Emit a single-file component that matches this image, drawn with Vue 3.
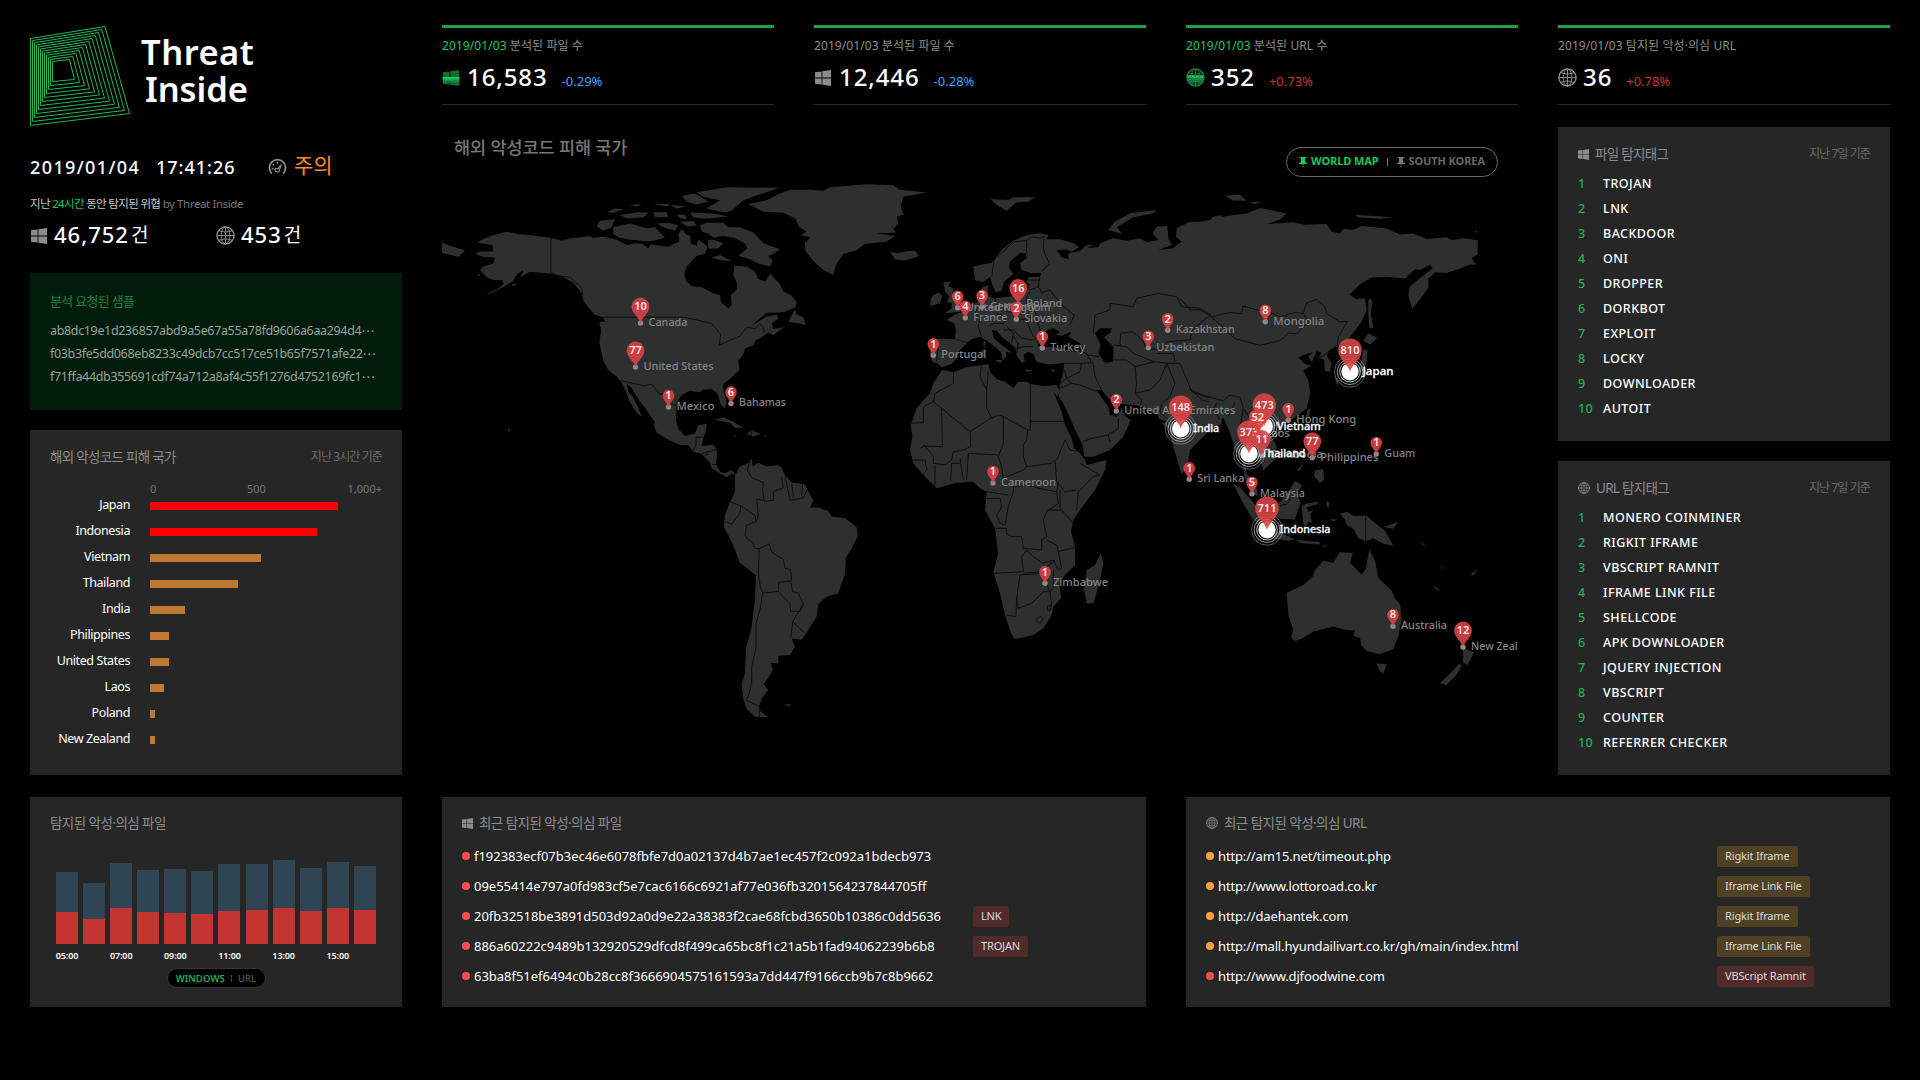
<script setup>
import { h } from 'vue'

const WinIcon = (props) =>
  h('svg', { viewBox: '0 0 16 16', fill: props.fill || '#8c8c8c' }, [
    h('path', { d: 'M0 2.3 6.6 1.4V7.6H0ZM7.4 1.3 16 0V7.6H7.4ZM0 8.4H6.6V14.6L0 13.7ZM7.4 8.4H16V16L7.4 14.7Z' })
  ])
WinIcon.props = ['fill']

const GlobeIcon = (props) =>
  h('svg', { viewBox: '0 0 20 20', fill: 'none', stroke: props.stroke || '#8c8c8c', 'stroke-width': 1 }, [
    h('circle', { cx: 10, cy: 10, r: 9, 'stroke-width': 1.5 }),
    h('ellipse', { cx: 10, cy: 10, rx: 4.6, ry: 9 }),
    h('path', { d: 'M10 1V19M1 10H19M3 5Q10 8 17 5M3 15Q10 12 17 15' })
  ])
GlobeIcon.props = ['stroke']

const rings = Array.from({ length: 12 }, (_, i) => {
  const t = i / 11
  const m = (a, b) => (a + (b - a) * t).toFixed(2)
  return `${m(0.5, 22.5)},${m(12.5, 35.5)} ${m(75, 39.5)},${m(0.5, 33.5)} ${m(99.5, 44.5)},${m(87.5, 53.5)} ${m(0.5, 22.5)},${m(99.5, 55.5)}`
})

const samples = [
  'ab8dc19e1d236857abd9a5e67a55a78fd9606a6aa294d4',
  'f03b3fe5dd068eb8233c49dcb7cc517ce51b65f7571afe22',
  'f71ffa44db355691cdf74a712a8af4c55f1276d4752169fc1'
]

const stats = [
  { label: '분석된 파일 수', value: '16,583', diff: '-0.29%', icon: 'win', on: true },
  { label: '분석된 파일 수', value: '12,446', diff: '-0.28%', icon: 'win' },
  { label: '분석된 URL 수', value: '352', diff: '+0.73%', icon: 'globe', on: true, up: true },
  { label: '탐지된 악성·의심 URL', value: '36', diff: '+0.78%', icon: 'globe', up: true }
]

const countries = [
  ['Japan', 188, true], ['Indonesia', 167, true], ['Vietnam', 111], ['Thailand', 88], ['India', 35],
  ['Philippines', 19], ['United States', 19], ['Laos', 14], ['Poland', 5], ['New Zealand', 5]
]

const hours = [
  [72, 32, '05:00'], [61, 25], [81, 36, '07:00'], [74, 32], [75, 31, '09:00'], [73, 30],
  [80, 33, '11:00'], [80, 34], [84, 36, '13:00'], [76, 33], [82, 36, '15:00'], [78, 34]
]

const fileTags = ['TROJAN', 'LNK', 'BACKDOOR', 'ONI', 'DROPPER', 'DORKBOT', 'EXPLOIT', 'LOCKY', 'DOWNLOADER', 'AUTOIT']
const urlTags = ['MONERO COINMINER', 'RIGKIT IFRAME', 'VBSCRIPT RAMNIT', 'IFRAME LINK FILE', 'SHELLCODE', 'APK DOWNLOADER', 'JQUERY INJECTION', 'VBSCRIPT', 'COUNTER', 'REFERRER CHECKER']

const files = [
  ['f192383ecf07b3ec46e6078fbfe7d0a02137d4b7ae1ec457f2c092a1bdecb973'],
  ['09e55414e797a0fd983cf5e7cac6166c6921af77e036fb3201564237844705ff'],
  ['20fb32518be3891d503d92a0d9e22a38383f2cae68fcbd3650b10386c0dd5636', 'LNK'],
  ['886a60222c9489b132920529dfcd8f499ca65bc8f1c21a5b1fad94062239b6b8', 'TROJAN'],
  ['63ba8f51ef6494c0b28cc8f3666904575161593a7dd447f9166ccb9b7c8b9662']
]
const urls = [
  ['http://am15.net/timeout.php', 'Rigkit Iframe', 'warn'],
  ['http://www.lottoroad.co.kr', 'Iframe Link File', 'warn'],
  ['http://daehantek.com', 'Rigkit Iframe', 'warn'],
  ['http://mall.hyundailivart.co.kr/gh/main/index.html', 'Iframe Link File', 'warn'],
  ['http://www.djfoodwine.com', 'VBScript Ramnit', 'bad']
]

// x, y, count, name, label width
const pins = [
  [640.5, 323, 10, 'Canada', 39], [635.5, 367, 77, 'United States', 70], [668.5, 407, 1, 'Mexico', 38],
  [731, 403.5, 6, 'Bahamas', 47], [957.7, 307.7, 6, 'United Kingdom', 85], [982, 307, 3, 'Germany', 46],
  [965.3, 317.7, 4, 'France', 34], [1018.3, 304.5, 16, 'Poland', 36], [1016.3, 319.3, 2, 'Slovakia', 43],
  [1042.3, 348, 1, 'Turkey', 35], [933.3, 355.3, 1, 'Portugal', 45], [1167.7, 330.3, 2, 'Kazakhstan', 59],
  [1148.3, 347.7, 3, 'Uzbekistan', 58], [1116.3, 411, 2, 'United Arab Emirates', 111],
  [1189.3, 479.3, 1, 'Sri Lanka', 47], [993, 483, 1, 'Cameroon', 55], [1045, 583.3, 1, 'Zimbabwe', 55],
  [1265.3, 321.7, 8, 'Mongolia', 51], [1288.3, 420.3, 1, 'Hong Kong', 60], [1312.3, 457.7, 77, 'Philippines', 58],
  [1376.3, 454, 1, 'Guam', 31], [1252, 493.7, 5, 'Malaysia', 45], [1393, 626.2, 8, 'Australia', 46],
  [1463, 647, 12, 'New Zealand', 66], [1257.7, 434, 52, 'Laos', 24], [1261.7, 455.5, 11, 'Cambodia', 53]
]
const hot = [
  [1350, 371.7, 810, 'Japan', 31], [1180.7, 428.7, 148, 'India', 26], [1264.3, 426.5, 473, 'Vietnam', 44],
  [1249, 453.7, 373, 'Thailand', 44], [1267, 529.7, 711, 'Indonesia', 51]
]
const radius = (n) => (n > 100 ? 11.8 : n > 9 ? 8.9 : 5.8)
const lift = (n) => (n > 100 ? 21.5 : n > 9 ? 16.5 : 11.4)
const pinPath = (n) => {
  const r = radius(n)
  const c = lift(n)
  return `M0 0C-1 ${-c * 0.3} ${-r} ${-c + r * 0.75} ${-r} ${-c}A${r} ${r} 0 1 1 ${r} ${-c}C${r} ${-c + r * 0.75} 1 ${-c * 0.3} 0 0Z`
}
</script>

<template>
  <div class="dash">
    <aside class="intro">
      <div class="brand">
        <svg class="logo" viewBox="0 0 100 100" fill="none" stroke="#25b555" stroke-width="1">
          <polygon v-for="(r, i) in rings" :key="i" :points="r" />
        </svg>
        <div class="name"><span>Threat</span><span class="second">Inside</span></div>
      </div>
      <div class="clock">
        <span class="date">2019/01/04</span><span class="time">17:41:26</span>
        <svg class="gauge" viewBox="0 0 20 18" fill="none" stroke="#8c8c8c" stroke-width="1.9">
          <path d="M4 16.5A8.6 8.6 0 1 1 16 16.5" />
          <path d="M9.500 14.500a1.800 1.800 0 1 1 1-3L14 7l-2 5.500a1.800 1.800 0 0 1-2.500 2" stroke-width="1.300" />
          <path d="M10 4v2M5 6.500l1.200 1.200M4 11.200h1.800" stroke-width="1.800" />
        </svg>
        <span class="level">주의</span>
      </div>
      <div class="since">지난 <b>24시간</b> 동안 탐지된 위협 <i>by Threat Inside</i></div>
      <div class="totals">
        <div class="total"><WinIcon class="w" /><span>46,752</span><em>건</em></div>
        <div class="total"><GlobeIcon class="g" /><span>453</span><em>건</em></div>
      </div>
    </aside>

    <section v-for="(s, i) in stats" :key="i" class="stat">
      <div class="stat-label"><span :class="{ on: s.on }">2019/01/03</span> {{ s.label }}</div>
      <div class="stat-row">
        <svg v-if="s.icon === 'win' && s.on" class="stat-win" viewBox="0 0 16 16">
          <defs>
            <linearGradient id="scan" x1="0" y1="0" x2="0" y2="1">
              <stop offset="0" stop-color="#20e067" /><stop offset=".3" stop-color="#1aa64e" />
              <stop offset="1" stop-color="#0f4a25" stop-opacity=".5" />
            </linearGradient>
          </defs>
          <path fill="#146b34" d="M0 2.300 6.600 1.400V7.600H0ZM7.400 1.300 16 0V7.600H7.400ZM0 8.400H6.600V14.600L0 13.700ZM7.400 8.400H16V16L7.400 14.700Z" />
          <path fill="url(#scan)" d="M-.500 7H16.500V15.500L0 14Z" />
        </svg>
        <WinIcon v-else-if="s.icon === 'win'" class="stat-win" />
        <svg v-else-if="s.on" class="stat-globe" viewBox="0 0 20 20" fill="none">
          <path d="M1 7.500H19V10A9 9 0 0 1 1 10Z" fill="url(#scan)" />
          <g stroke="#17803c"><circle cx="10" cy="10" r="9" stroke-width="1.500" /><ellipse cx="10" cy="10" rx="4.600" ry="9" /><path d="M10 1V19M3 5Q10 8 17 5M1 11H19M3 15Q10 12 17 15" /></g>
        </svg>
        <GlobeIcon v-else class="stat-globe" />
        <strong>{{ s.value }}</strong><small :class="{ up: s.up }">{{ s.diff }}</small>
      </div>
    </section>

    <div class="left">
      <section class="sample">
        <h2>분석 요청된 샘플</h2>
        <p v-for="s in samples" :key="s">{{ s }}<span>⋯</span></p>
      </section>
      <section class="panel victims">
        <header><h2>해외 악성코드 피해 국가</h2><span>지난 3시간 기준</span></header>
        <div class="axis"><span>0</span><span>500</span><span>1,000+</span></div>
        <div v-for="c in countries" :key="c[0]" class="row">
          <label>{{ c[0] }}</label><div class="bar" :class="{ red: c[2] }" :style="{ width: c[1] + 'px' }"></div>
        </div>
      </section>
    </div>

    <main class="world">
      <div class="world-head">
        <h1>해외 악성코드 피해 국가</h1>
        <div class="toggle">
          <svg viewBox="0 0 8 10"><path d="M0.500 0H7.500V1.200H6V5L8 6.300V7H4.500V8H3.500V7H0V6.300L2 5V1.200H.5ZM3.400 8.700H4.600V10H3.400Z" /></svg>
          <span>WORLD MAP</span><i></i>
          <svg class="off" viewBox="0 0 8 10"><path d="M0.500 0H7.500V1.200H6V5L8 6.300V7H4.500V8H3.500V7H0V6.300L2 5V1.200H.5ZM3.400 8.700H4.600V10H3.400Z" /></svg>
          <span class="off">SOUTH KOREA</span>
        </div>
      </div>
      <svg class="map" viewBox="442 180 1076 595">
        <!-- Americas -->
        <g transform="translate(430 170) scale(.33333 .35714)">
          <g class="land">
            <path d="M145 200 165 192 190 182 230 173 265 180 300 182 330 186 363 190 395 198 420 192 450 188 480 185 490 190 520 187 560 195 590 210 615 205 640 208 655 220 662 208 690 212 715 215 735 205 748 200 745 180 755 165 768 180 780 185 782 205 800 212 805 195 820 205 832 215 825 235 800 240 790 250 770 270 763 290 768 310 785 325 815 328 850 345 870 350 873 370 895 388 905 378 903 350 920 335 922 320 910 295 913 268 950 270 975 285 985 305 1005 312 1022 290 1035 305 1050 320 1060 340 1085 352 1100 370 1095 385 1060 398 1010 400 990 415 965 435 985 425 1010 410 1040 405 1045 415 1025 430 1030 445 1062 440 1030 462 1015 455 995 468 975 478 972 490 945 500 940 515 925 535 928 560 905 580 880 600 880 620 890 650 885 668 872 655 862 625 845 613 820 615 810 622 780 618 755 630 740 650 738 700 745 725 765 745 795 738 805 715 830 710 828 730 820 750 815 772 850 770 862 785 858 825 870 845 885 850 905 840 918 855 905 850 890 860 870 850 845 835 840 820 815 795 790 788 775 770 750 770 715 755 680 735 672 715 674 705 655 680 640 660 620 635 605 610 590 598 595 620 608 635 622 660 635 690 620 680 600 650 590 625 575 595 560 578 535 560 520 535 512 500 508 480 514 450 508 425 525 425 520 412 495 405 475 385 460 365 455 345 430 315 400 300 365 290 330 288 300 285 270 300 280 282 262 290 250 310 220 328 190 342 160 352 200 335 222 318 215 308 190 308 170 300 150 280 160 270 190 262 195 245 160 243 135 235 150 228 190 228 188 210 150 205Z" />
            <path d="M915 855 930 830 955 820 965 808 968 830 985 820 1010 830 1045 826 1055 835 1065 855 1085 875 1125 880 1138 905 1150 925 1140 945 1165 945 1195 955 1205 970 1245 975 1280 1000 1283 1025 1265 1060 1248 1085 1245 1130 1225 1185 1190 1195 1165 1215 1160 1250 1130 1295 1115 1315 1085 1312 1095 1335 1080 1358 1045 1360 1045 1382 1022 1380 1028 1400 1020 1415 1000 1440 1015 1455 995 1480 988 1500 990 1515 1015 1532 975 1530 950 1510 940 1480 935 1440 945 1410 948 1340 965 1280 975 1200 978 1135 930 1100 905 1040 882 1000 885 965 900 930 915 900 915 865Z" />
            <path d="M955 95 1010 85 1045 68 1080 55 1140 55 1180 58 1200 48 1310 40 1390 43 1410 55 1440 58 1490 63 1420 75 1412 100 1420 125 1400 130 1405 150 1390 165 1398 175 1340 178 1395 185 1370 200 1305 207 1280 225 1240 235 1218 265 1210 293 1180 280 1150 255 1125 225 1125 205 1142 188 1112 183 1130 172 1108 160 1095 135 1060 120 1000 117Z" />
            <path d="M36 203 60 212 105 225 85 243 36 232Z" />
            <path d="M800 62 890 48 1050 50 990 68 940 85 905 115 880 118 830 108 870 85 820 75ZM755 72 795 66 835 88 800 97 770 88ZM780 120 850 122 895 130 830 136 790 133ZM550 160 600 150 650 163 675 160 705 190 660 200 600 195 570 190 550 180ZM510 142 555 138 545 160 520 170 500 158ZM570 127 620 118 655 120 640 133 590 135ZM530 118 555 108 580 110 550 120ZM670 118 710 118 715 132 675 132ZM740 125 765 125 770 138 750 135ZM680 150 715 148 745 155 735 170 700 160ZM750 145 790 143 800 155 770 158ZM670 95 720 95 710 102ZM720 98 770 102 740 108ZM600 98 635 95 620 103Z" />
            <path d="M810 155 830 148 880 148 895 160 930 160 970 175 1000 205 1050 222 1030 235 1015 240 1028 255 1020 270 985 262 960 250 925 240 952 220 945 205 910 190 880 185 850 190 835 178 815 172ZM835 220 835 195 850 195 880 205 865 220ZM845 245 870 238 905 255 870 253ZM1075 425 1095 390 1100 405 1120 412 1127 435 1110 430ZM855 700 880 692 910 705 940 722 915 722 900 708ZM950 740 965 728 992 740 970 746ZM910 742 922 745 912 747ZM1003 743 1015 744 1004 747ZM233 723 242 728 236 734ZM140 292 152 292 145 297ZM245 320 262 318 250 326ZM1063 1495 1085 1497 1075 1502Z" />
          </g>
          <g class="edge">
            <path d="M363 190V288L390 297 420 300 455 330 458 350M523 412H762L800 420 845 430 872 460 868 490 905 475 930 465 950 440 975 445 990 430 1000 440 1003 455M575 590 640 604 665 600 690 628 705 625 725 655 740 662M798 748H820M798 748V770L790 785M862 782 830 790 815 795M825 798 835 795M845 825 858 825" />
            <path d="M960 812 952 840 965 862 1000 875 998 900 1003 928 1030 925 1030 900 1060 890 1055 860M1000 925 980 922 985 965 978 985M903 930 932 940 975 967 978 985 950 995 945 1025 970 1045 975 1060 988 1060 1018 1047 1025 1070 1060 1090 1065 1115 1082 1120 1085 1150M932 940 930 960 905 992 890 985M988 1060 985 1130 990 1160 998 1185 1045 1180 1045 1155 1082 1150 1088 1180 1105 1185 1120 1215 1110 1237 1082 1235 1080 1215 1045 1180M998 1185 990 1230 978 1270 978 1340 965 1390 965 1440 950 1485 988 1502V1532M1120 1215 1088 1265 1082 1310M1088 1265 1125 1297M1065 855 1070 880 1080 925 1120 918 1135 890M1085 880 1090 915M1118 880 1115 915M965 728V745" />
          </g>
        </g>
        <!-- Europe, Africa, Middle East -->
        <g transform="translate(880 170) scale(.33333)">
          <g class="land">
            <path d="M280 290 285 330 310 337 330 320 337 345 347 367 365 362 372 335 385 325 400 312 387 292 390 275 420 248 437 250 440 265 420 280 425 300 455 310 485 308 480 320 445 322 440 335 450 345 430 365 400 378 370 382 345 385 325 380 322 365 325 345 305 355 300 385 290 398 270 405 250 425 228 432 200 450 222 460 228 480 225 508 185 506 150 507 152 530 150 555 158 577 172 580 185 592 215 582 235 560 235 545 260 520 275 508 300 500 325 515 350 535 365 550 368 572 378 560 378 545 397 548 365 525 342 505 335 480 350 482 365 500 385 515 405 533 410 555 425 580 435 572 430 555 445 545 460 552 470 575 500 583 525 582 552 578 550 605 540 640 537 680 550 700 575 755 590 790 608 825 613 860 640 860 690 840 730 800 752 750 735 738 725 715 710 740 690 735 685 710 670 690 650 660 665 660 685 685 705 700 730 702 760 705 790 710 820 730 835 735 835 745 860 755 845 760 865 775 880 830 895 880 905 912 920 895 930 840 950 820 985 785 1010 768 1025 762 1025 135 1000 140 990 150 960 155 930 155 890 175 888 200 905 215 880 235 835 240 875 225 865 205 862 168 830 170 818 190 835 210 800 217 780 205 740 212 700 205 660 220 655 232 620 235 640 225 620 225 600 243 565 250 565 268 545 262 530 240 555 238 575 245 597 232 580 220 540 208 500 208 505 195 480 190 440 195 400 212 365 240 335 278 300 285Z" />
            <path d="M190 600 220 607 260 592 325 582 330 605 350 628 375 635 400 655 415 635 440 635 450 642 490 648 530 645 540 665 532 680 520 665 545 725 555 765 575 805 582 835 600 850 615 870 620 885 680 870 675 900 645 960 600 1020 580 1050 573 1085 585 1130 585 1185 555 1215 538 1240 543 1285 520 1310 515 1335 490 1375 460 1395 405 1408 393 1390 375 1335 360 1270 340 1205 355 1150 345 1075 315 1020 320 965 300 955 280 935 230 938 170 955 130 915 100 880 90 840 97 800 92 765 110 715 150 670 160 640 185 602Z" />
            <path d="M662 1150 670 1180 655 1250 640 1300 620 1300 612 1260 620 1200 645 1185ZM190 335 212 335 205 348 220 355 218 370 240 395 250 412 240 425 195 430 215 415 215 400 200 395 208 380 195 365ZM160 375 175 368 187 378 180 400 150 408 153 385ZM30 245 55 250 85 243 105 242 117 258 75 272 45 268ZM332 87 385 90 400 82 465 82 445 95 410 97 380 122 350 105ZM830 120 820 130 760 142 710 172 728 192 685 180 705 155 750 130ZM310 513 318 517 312 535ZM305 540 317 537 313 560 305 558ZM343 570 367 570 362 580ZM435 598 460 601 440 606ZM512 600 528 598 518 606ZM300 385 308 350 322 348 320 370 312 385Z" />
          </g>
          <path class="sea" d="M470 510 485 487 520 475 540 485 528 495 545 497 575 485 565 500 600 520 615 540 580 545 540 535 500 530 475 528ZM645 490 660 475 695 475 690 490 672 502 700 530 700 575 675 578 655 550 662 525Z" />
          <path class="edge" d="M335 320 342 270 380 235 400 215 440 212M440 250 440 212 455 200 480 205 492 200 490 240 508 280 485 305M480 320 475 350 450 360 440 345M440 330H478M475 350 485 368 510 360 545 405 583 435 570 465M450 365 440 380 440 410 465 425 480 480M345 385 350 410 380 425 410 430 440 410M300 400 285 430 300 445 295 470 305 500M228 508 262 518M160 510 175 520 170 575M325 468 345 460 370 460 380 440 350 430M380 470 400 490 395 520M400 445 440 450 455 490 470 510M370 480 400 480 425 505 465 510M400 540 430 530 460 530M420 450 460 440M400 500 415 520 410 550M550 580 600 580 635 578 620 550 590 540M620 555 660 560M638 575 645 620 665 660M553 600 560 625 600 605 605 580M575 640 540 655M575 640 600 645 650 665M540 640 560 625 575 640M610 815 635 805 685 795 690 815M685 795 715 775 715 745M640 490 645 435 690 420 690 400 760 410 770 385 835 370 890 380 905 410 960 415 1000 440 1025 430M720 530 722 490 760 485 790 515 800 540 840 535 860 515 930 510 935 480 985 440M700 525 740 530 760 550 820 575M700 570 740 570 765 590 770 640 765 670 785 690 780 710M765 670 810 660 840 630 860 580M765 590 825 575 860 580 900 580M860 580 885 640 870 680 845 700 840 725 860 745M830 550 880 550 885 575M900 580 925 640 935 665 975 680 1010 685M930 655 965 690 1010 700" />
          <path class="edge" d="M305 585 300 620 320 660 320 715 335 745 355 735 370 740M325 605 320 660M220 605 220 640 165 670 160 695 185 715 270 785 340 740M185 715 187 830 130 828M92 760 130 758 130 710 160 695M451 640V780L443 780 440 810 430 825 430 860 440 890M451 754 555 754M370 740 443 780M370 740 370 820 355 860 365 890 370 925 430 900 440 890 515 880 525 870 530 935 555 965 590 960M270 785 272 830 250 840 220 845 215 870 195 885 160 880 160 860 135 828 120 835M265 850 355 855M265 850 260 930M240 865 250 930M215 880 212 935M240 880H215M95 870 135 870 140 900 125 920M165 885 165 950 145 935M555 810 570 840 600 845M555 810 530 870M600 880 660 915 640 920 595 965 590 1020M320 985 360 985 365 1010 350 1035 360 1060 375 1065 385 1010 400 965 400 950 440 945 500 960 530 965 535 1000 500 1025 490 1050 500 1100 485 1110 485 1140 430 1135 425 1100 395 1100 380 1090 380 1075 345 1075M320 965 385 975M500 1020 545 1020 580 1060M530 965 535 935M540 1020 540 960M500 1110 530 1125 535 1145 585 1132M535 1145 545 1195 535 1200 520 1170 490 1180 460 1160 440 1140 425 1160 430 1205 340 1210M430 1210 485 1205 525 1170M420 1215 485 1210 510 1265 490 1265 455 1300 415 1315 410 1285 420 1215M410 1285 408 1340 380 1335M510 1265 515 1310M520 1200 520 1255 510 1265M470 1345 482 1338 490 1347 480 1360 472 1356ZM502 1308 513 1305 512 1320 503 1322Z" />
        </g>
        <!-- East Asia and Oceania -->
        <g transform="translate(1180 130) scale(.33333 .37622)">
          <g class="land">
            <path d="M100 233 200 222 240 207 320 222 300 238 260 250 340 245 375 252 440 250 455 270 480 275 490 263 520 265 545 255 620 262 660 278 700 275 740 290 800 285 815 293 850 288 893 293 893 330 875 340 888 358 870 357 840 368 800 380 765 378 745 395 745 420 720 450 697 475 685 440 690 415 725 390 758 368 750 358 720 372 705 370 675 395 620 390 575 392 540 410 508 438 530 450 555 447 560 480 545 510 510 550 480 572 450 585 440 600 455 620 450 642 435 640 432 610 415 605 425 592 410 588 395 618 385 602 400 590 370 598 355 605 375 622 395 625 370 640 385 665 390 700 380 740 350 760 325 775 300 785 285 790 275 800 270 810 290 840 285 875 250 905 245 890 225 870 205 860 195 880 200 915 225 935 235 975 210 960 195 925 185 870 165 850 150 805 130 765 110 778 85 790Z" />
            <path d="M565 455 570 448 577 455 573 490 580 525 568 528 565 490ZM565 540 592 553 570 570 550 560ZM550 582 563 585 560 615 548 640 500 662 478 668 500 645 535 635 545 610ZM465 655 477 665 470 682ZM392 740 385 765 377 765 382 745ZM405 905 430 902 432 930 420 938 402 920ZM350 905 370 885 360 905ZM380 820 395 830 400 880 385 860ZM160 940 180 950 225 995 250 1035 245 1062 215 1030 185 985ZM275 1005 300 990 330 955 345 933 367 945 350 965 362 990 345 1035 300 1033 285 1028ZM245 1070 300 1070 345 1088 325 1092 270 1085ZM365 1000 380 993 415 988 412 995 380 1003 385 1015 400 1010 390 1022 397 1045 385 1040 380 1053 370 1048ZM350 1090 420 1095 418 1102 360 1098ZM440 985 448 990 445 1005 440 1000ZM445 1035 475 1035 460 1040ZM480 1020 502 1015 520 1025 560 1025 600 1055 615 1065 640 1105 610 1100 580 1085 557 1093 535 1085 520 1060 500 1050 495 1035ZM610 1055 655 1042 640 1060ZM425 1110 445 1098 435 1108Z" />
            <path d="M320 1230 370 1210 400 1185 405 1170 430 1145 460 1150 480 1122 518 1125 510 1150 545 1182 558 1165 568 1115 585 1145 595 1190 635 1225 645 1245 660 1260 665 1300 655 1345 640 1380 600 1393 560 1385 545 1370 540 1350 520 1345 525 1330 500 1330 460 1320 400 1333 370 1350 345 1358 333 1348 340 1330 325 1290ZM590 1418 620 1420 610 1445 600 1440ZM845 1372 858 1380 882 1388 862 1422 848 1415 850 1395ZM838 1418 845 1425 830 1448 800 1475 780 1470 810 1445ZM525 225 640 232 600 236 535 232ZM135 175 180 172 200 188 160 188ZM205 190 245 193 225 197ZM885 270 893 268 890 274ZM755 1205 782 1226 770 1222ZM872 1180 892 1168 880 1184ZM720 1090 738 1108 728 1103ZM780 1152 790 1168 784 1164Z" />
          </g>
          <path class="edge" d="M0 448 30 478 60 478 95 497 125 490 150 485 185 488 190 468 240 480 270 485 300 497 345 485 370 488 380 460 410 450 435 470 440 488 480 510 503 508 475 550 473 570M95 497 130 525 165 555 240 572 300 560 325 540 350 542 385 510 370 488M410 605 430 600 473 570M30 690 70 705 130 720 150 705 180 710 190 740 205 760 240 760 275 780M110 725 100 745 120 770M165 725 145 760M190 740 180 790 200 850M205 760 220 800 245 810 265 850M557 1028V1092M285 1000 320 995 345 960" />
        </g>

        <g v-for="p in pins" :key="p[3]" :transform="`translate(${p[0]} ${p[1]})`">
          <circle r="2.700" fill="#8b8b8b" />
          <text class="place" x="8" y="2.800" :textLength="p[4]" lengthAdjust="spacingAndGlyphs">{{ p[3] }}</text>
        </g>
        <g v-for="p in hot" :key="p[3]" :transform="`translate(${p[0]} ${p[1]})`" fill="none" stroke="#fff">
          <circle r="15.500" stroke-opacity=".35" /><circle r="12.800" stroke-opacity=".6" />
          <circle r="10.300" stroke-opacity=".8" /><circle r="8.700" fill="#fff" stroke="none" />
          <text class="place big" x="12.500" y="3" :textLength="p[4]" lengthAdjust="spacingAndGlyphs">{{ p[3] }}</text>
        </g>
        <g v-for="p in [...hot, ...pins]" :key="'c' + p[3]" :transform="`translate(${p[0]} ${p[1]})`">
          <path :d="pinPath(p[2])" fill="#d94345" fill-opacity=".9" />
          <text class="count" y="0" :dy="-lift(p[2]) + 3.6">{{ p[2] }}</text>
        </g>
      </svg>
    </main>

    <div class="right">
      <section class="panel tags">
        <header><WinIcon class="hi" /><h2>파일 탐지태그</h2><span>지난 7일 기준</span></header>
        <ol><li v-for="(t, i) in fileTags" :key="t"><b>{{ i + 1 }}</b>{{ t }}</li></ol>
      </section>
      <section class="panel tags">
        <header><GlobeIcon class="hi globe" /><h2>URL 탐지태그</h2><span>지난 7일 기준</span></header>
        <ol><li v-for="(t, i) in urlTags" :key="t"><b>{{ i + 1 }}</b>{{ t }}</li></ol>
      </section>
    </div>

    <section class="panel hourly">
      <header><h2>탐지된 악성·의심 파일</h2></header>
      <div class="bars">
        <div v-for="(b, i) in hours" :key="i" class="col">
          <div class="url" :style="{ height: b[0] - b[1] + 'px' }"></div>
          <div class="win" :style="{ height: b[1] + 'px' }"></div>
          <span>{{ b[2] }}</span>
        </div>
      </div>
      <div class="pill"><b>WINDOWS</b><i></i><span>URL</span></div>
    </section>

    <section class="panel feed">
      <header><WinIcon class="hi" /><h2>최근 탐지된 악성·의심 파일</h2></header>
      <div v-for="f in files" :key="f[0]" class="line">
        <i class="dot bad"></i><span class="hash">{{ f[0] }}</span><em v-if="f[1]" class="tag bad">{{ f[1] }}</em>
      </div>
    </section>
    <section class="panel feed">
      <header><GlobeIcon class="hi globe" /><h2>최근 탐지된 악성·의심 URL</h2></header>
      <div v-for="u in urls" :key="u[0]" class="line">
        <i class="dot" :class="u[2]"></i><span class="link">{{ u[0] }}</span><em class="tag" :class="u[2]">{{ u[1] }}</em>
      </div>
    </section>
  </div>
</template>

<style>
body { background: #000; }
</style>

<style scoped>
.dash {
  box-sizing: border-box;
  width: 1920px;
  height: 1080px;
  padding: 25px 30px 0;
  display: grid;
  grid-template-columns: 372px repeat(4, 332px);
  grid-template-rows: 80px 22px 146px 502px 22px 210px;
  align-content: start;
  column-gap: 40px;
  background: #000;
  color: #fff;
  font-family: "Noto Sans", "Noto Sans CJK KR", sans-serif;
  overflow: hidden;
}
h1, h2, p, ol { margin: 0; padding: 0; font-weight: 400; }
em, i { font-style: normal; }
svg { display: block; flex: none; }
.intro { grid-area: 1 / 1 / 4 / 2; }
.stat { grid-row: 1; }
.left { grid-area: 4 / 1; display: flex; flex-direction: column; gap: 20px; }
.world { grid-area: 3 / 2 / 5 / 5; }
.right { grid-area: 3 / 5 / 5 / 6; display: flex; flex-direction: column; gap: 20px; }
.hourly { grid-area: 6 / 1; }
.feed { grid-area: 6 / 2 / 7 / 4; }
.feed + .feed { grid-area: 6 / 4 / 7 / 6; }

.brand { display: flex; height: 124px; }
.logo { width: 100px; height: 100px; margin-top: 1px; }
.name { margin: 8px 0 0 11px; font-size: 34.500px; line-height: 37px; font-weight: 600; letter-spacing: .5px; display: flex; flex-direction: column; }
.name .second { margin-left: 4px; letter-spacing: -.1px; }
.clock { display: flex; height: 36px; line-height: 36px; font-size: 18px; font-weight: 500; white-space: nowrap; }
.date { width: 126px; letter-spacing: 1.4px; }
.time { width: 112px; letter-spacing: 1px; }
.gauge { width: 19px; height: 17px; margin-top: 9px; }
.level { margin-left: 7px; font-size: 21px; font-weight: 400; color: #ff8c28; line-height: 33px; }
.since { margin-top: 9px; height: 20px; line-height: 20px; font-size: 11.500px; letter-spacing: -.66px; color: #c8c8c8; white-space: nowrap; }
.since b { font-weight: 400; color: #1dc75b; }
.since i { color: #777; letter-spacing: -.4px; }
.totals { display: flex; margin-top: 4px; height: 32px; }
.total { width: 186px; display: flex; align-items: center; }
.total .w { width: 16px; height: 16px; margin: 3px 7px 0 1px; }
.total .g { width: 19px; height: 19px; margin: 3px 6px 0 0; }
.total span { font-size: 22px; font-weight: 500; letter-spacing: 1px; }
.total em { font-size: 19px; margin-left: 2px; }

.stat { border-top: 3px solid #1ba34c; border-bottom: 1px solid #272727; box-sizing: border-box; height: 80px; }
.stat-label { margin-top: 8px; height: 20px; line-height: 20px; font-size: 12px; letter-spacing: .08px; color: #8c8c8c; }
.stat-label .on { color: #1dc75b; }
.stat-row { display: flex; align-items: center; height: 34px; margin-top: 3px; }
.stat-win { width: 16px; height: 16px; margin: 3px 8px 0 1px; overflow: visible; }
.stat-globe { width: 19px; height: 19px; margin: 3px 6px 0 0; }
.stat-row strong { font-size: 24px; font-weight: 500; letter-spacing: .9px; }
.stat-row small { margin: 9px 0 0 14px; font-size: 13px; letter-spacing: 0; color: #3fa2ff; }
.stat-row small.up { color: #c93434; }

.sample { height: 137px; box-sizing: border-box; padding: 18px 20px; background: #021c0c; }
.sample h2 { font-size: 13px; line-height: 20px; letter-spacing: -.7px; color: #17833c; margin-bottom: 8px; }
.sample p { font-size: 12.500px; line-height: 23px; letter-spacing: -.35px; color: #98a29b; white-space: nowrap; }
.sample p span { position: relative; top: -3px; line-height: 1; letter-spacing: 0; }

.panel { background: #262626; box-sizing: border-box; padding: 0 20px; }
.panel header { display: flex; align-items: center; }
.panel h2 { font-size: 13.500px; letter-spacing: -.7px; color: #8c8c8c; line-height: 20px; }
.panel header > span { margin-left: auto; font-size: 12px; letter-spacing: -.9px; color: #6a6a6a; line-height: 20px; }
.hi { width: 11px; height: 11px; margin-right: 6px; }
.hi.globe { width: 12px; height: 12px; }

.victims { height: 345px; padding-top: 17px; }
.axis { display: flex; justify-content: space-between; margin: 11px 0 0 100px; height: 19px; line-height: 22px; font-size: 11px; color: #777; }
.axis span:nth-child(2) { margin-left: 9px; }
.row { display: flex; align-items: center; height: 26px; position: relative; top: -4px; }
.row label { width: 80px; text-align: right; margin-right: 20px; font-size: 12.500px; letter-spacing: -.4px; white-space: nowrap; line-height: 24px; height: 26px; }
.bar { height: 8px; background: #bd7833; }
.bar.red { background: #f00; }

.world-head { height: 53px; display: flex; justify-content: space-between; box-sizing: border-box; }
.world-head h1 { margin: 4px 0 0 12px; font-size: 17.500px; line-height: 32px; letter-spacing: -.1px; color: #777; font-weight: 500; }
.toggle { box-sizing: border-box; width: 212px; height: 30px; margin: 20px 20px 0 0; border: 1px solid #666; border-radius: 15px; display: flex; align-items: center; justify-content: center; font-size: 11px; font-weight: 700; color: #1dc75b; white-space: nowrap; letter-spacing: -.1px; }
.toggle svg { width: 8px; height: 10px; fill: #1dc75b; margin-right: 4px; }
.toggle svg.off { fill: #777; }
.toggle span.off { color: #666; }
.toggle span { line-height: 26px; height: 28px; }
.toggle i { width: 1px; height: 8px; background: #777; margin: 0 9px 0 8px; }
.map { width: 1076px; height: 595px; }
.land { fill: #2e302f; }
.sea { fill: #000; }
.edge { fill: none; stroke: #0d0e0d; stroke-width: 1px; vector-effect: non-scaling-stroke; }
.edge path { vector-effect: non-scaling-stroke; }
.place { font-size: 11px; fill: #858585; font-weight: 500; }
.place.big { fill: #fff; stroke: #fff; stroke-width: .3px; }
.count { font-size: 11px; font-weight: 600; fill: #fff; fill-opacity: .9; text-anchor: middle; }

.tags { height: 314px; padding-top: 17px; }
.tags ol { list-style: none; margin-top: 7px; }
.tags li { display: flex; height: 25px; line-height: 25px; font-size: 12.500px; font-weight: 500; letter-spacing: .45px; }
.tags li b { width: 25px; font-weight: 500; color: #22b052; }

.hourly { padding-top: 16px; }
.hourly h2, .feed h2 { letter-spacing: -.55px; }
.bars { display: flex; gap: 5.090px; height: 111px; align-items: flex-end; margin-left: 6px; }
.col { width: 22px; flex: none; display: flex; flex-direction: column; align-items: center; }
.url { width: 22px; background: #304553; }
.win { width: 22px; background: #c23531; }
.col span { height: 0; line-height: 23px; font-size: 9px; font-weight: 600; white-space: nowrap; letter-spacing: -.1px; }
.pill { width: 99px; height: 20px; box-sizing: border-box; border: 1px solid #333; margin: 24px auto 0; border-radius: 10px; background: #000; display: flex; align-items: center; justify-content: center; font-size: 9.500px; letter-spacing: .15px; }
.pill b { font-weight: 500; color: #1dc75b; }
.pill span { color: #666; }
.pill i { width: 1px; height: 7px; background: #444; margin: 0 6px; }

.feed { padding-top: 16px; }
.feed header { margin-bottom: 8px; }
.line { display: flex; align-items: center; height: 30px; }
.dot { width: 8px; height: 8px; border-radius: 50%; margin-right: 4px; }
.dot.bad { background: #ff4d4d; }
.dot.warn { background: #ff9f43; }
.line span { width: 499px; white-space: nowrap; font-size: 13px; }
.hash { letter-spacing: -.02px; }
.link { letter-spacing: -.15px; }
.tag { height: 21px; line-height: 20px; padding: 0 8px; border-radius: 2px; font-size: 11px; letter-spacing: -.15px; color: #ddd; white-space: nowrap; }
.tag.bad { background: #502b2a; }
.tag.warn { background: #504024; }
</style>
